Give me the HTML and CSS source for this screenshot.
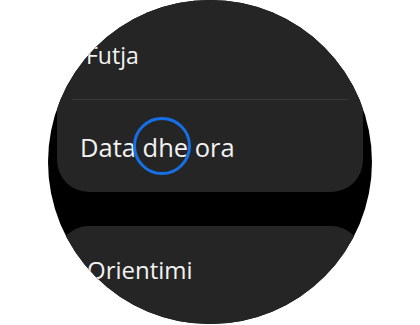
FILE: index.html
```html
<!DOCTYPE html>
<html lang="sq">
<head>
<meta charset="utf-8">
<title>Cilësimet</title>
<link rel="stylesheet" href="styles.css">
</head>
<body>
  <div class="watch">
    <div class="list">
      <div class="card">
        <div class="row row-futja"><span class="label label-small">Futja</span></div>
        <div class="divider"></div>
        <div class="row row-focus">
          <span class="label label-focus">Data dhe ora</span>
          <span class="tap-ring"></span>
        </div>
      </div>
      <div class="card">
        <div class="row row-orient"><span class="label label-mid">Orientimi</span></div>
      </div>
    </div>
  </div>
</body>
</html>
```

FILE: styles.css
```css
html, body {
  margin: 0;
  padding: 0;
  background: #ffffff;
}

body {
  width: 420px;
  height: 325px;
  overflow: hidden;
  font-family: "Open Sans", "Noto Sans", sans-serif;
}

.watch {
  width: 324px;
  height: 324px;
  margin-left: 48px;
  border-radius: 50%;
  overflow: hidden;
  background: #000000;
}

.list {
  display: flex;
  flex-direction: column;
  gap: 34px;
  padding: 0 9px;
  margin-top: -22px;
}

.card {
  background: #252525;
  border-radius: 32px;
  display: flex;
  flex-direction: column;
}

.row {
  position: relative;
  display: flex;
  align-items: flex-start;
}

.row-futja {
  padding: 62px 0 29px 29px;
}

.row-focus {
  padding: 32px 0 30px 23px;
}

.row-orient {
  padding: 29px 0 60px 30px;
}

.divider {
  height: 1px;
  margin: 0 15px;
  background: #383838;
}

.label {
  color: #f2f2f2;
  line-height: 30px;
  white-space: nowrap;
}

.label-small {
  font-size: 23px;
}

.label-focus {
  font-size: 25.5px;
}

.label-mid {
  font-size: 24px;
}

.tap-ring {
  position: absolute;
  left: 76px;
  top: 17px;
  width: 52px;
  height: 52px;
  border: 3px solid #1570e8;
  border-radius: 50%;
}
```
